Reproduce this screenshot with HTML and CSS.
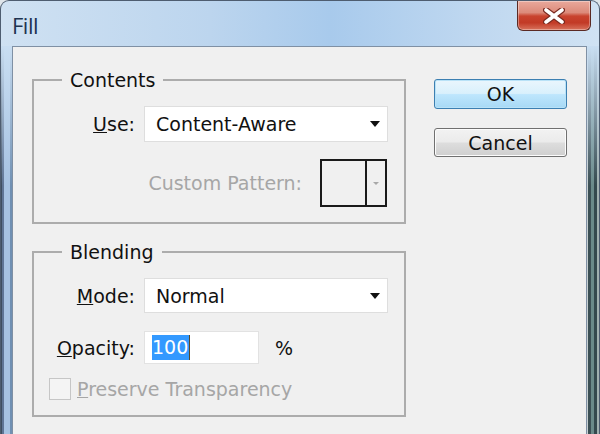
FILE: index.html
```html
<!DOCTYPE html>
<html lang="en">
<head>
    <meta charset="UTF-8">
    <title>Fill</title>
    <link rel="stylesheet" href="styles.css">
</head>
<body>
    <div class="window">
        <div class="titlebar">
            <span class="title">Fill</span>
            <div class="close">
                <svg width="22" height="16" viewBox="0 0 22 16">
                    <path d="M3 2 L19 14 M19 2 L3 14" stroke="#7a2a20" stroke-width="6" stroke-linecap="round"/>
                    <path d="M3 2 L19 14 M19 2 L3 14" stroke="#fff" stroke-width="3.6" stroke-linecap="round"/>
                </svg>
            </div>
        </div>
        <div class="frame">
            <div class="client">
                <div class="groups">
                    <fieldset class="group contents">
                        <legend>Contents</legend>
                        <div class="row">
                            <label class="lbl"><u>U</u>se:</label>
                            <div class="select">
                                <span>Content-Aware</span>
                                <i class="arrow"></i>
                            </div>
                        </div>
                        <div class="row pattern-row">
                            <label class="lbl disabled">Custom Pattern:</label>
                            <div class="pattern">
                                <div class="swatch"></div>
                                <div class="pick"><i></i></div>
                            </div>
                        </div>
                    </fieldset>
                    <fieldset class="group blending">
                        <legend>Blending</legend>
                        <div class="row">
                            <label class="lbl"><u>M</u>ode:</label>
                            <div class="select">
                                <span>Normal</span>
                                <i class="arrow"></i>
                            </div>
                        </div>
                        <div class="row opacity-row">
                            <label class="lbl"><u>O</u>pacity:</label>
                            <div class="input"><span class="sel">100</span><span class="caret"></span></div>
                            <span class="pct">%</span>
                        </div>
                        <div class="row check-row">
                            <span class="box"></span>
                            <label class="disabled"><u>P</u>reserve Transparency</label>
                        </div>
                    </fieldset>
                </div>
                <div class="buttons">
                    <button class="btn ok">OK</button>
                    <button class="btn">Cancel</button>
                </div>
            </div>
        </div>
    </div>
</body>
</html>
```

FILE: styles.css
```css
html, body{
    margin: 0;
    padding: 0;
    background: #dfe5ea;
}
body{
    width: 600px;
    height: 434px;
    overflow: hidden;
    font-family: "DejaVu Sans", Verdana, sans-serif;
    color: #111;
}
.window{
    display: flex;
    flex-direction: column;
    height: 434px;
    box-sizing: border-box;
    border: 1px solid #4e5d70;
    border-bottom: none;
    border-radius: 9px 9px 0 0;
    background: linear-gradient(to right, #cfe1f2 0%, #bcd5ee 35%, #a8caec 55%, #bed7f0 78%, #d0e2f3 100%);
    overflow: hidden;
}
.titlebar{
    height: 45px;
    display: flex;
    justify-content: space-between;
    align-items: flex-start;
    padding-left: 11px;
}
.title{
    margin-top: 9px;
    font-family: "Open Sans", "DejaVu Sans", sans-serif;
    font-size: 22px;
    letter-spacing: -0.5px;
    color: #1d3350;
}
.close{
    width: 74px;
    height: 30px;
    margin-right: 8px;
    box-sizing: border-box;
    border: 1px solid #5b2a24;
    border-top: none;
    border-radius: 0 0 6px 6px;
    background: linear-gradient(to bottom, #e9a99c 0%, #dc8a7a 40%, #c9432e 52%, #c23a26 75%, #d8735d 100%);
    box-shadow: inset 0 0 0 1px rgba(255,255,255,0.35);
    display: flex;
    align-items: center;
    justify-content: center;
}
.frame{
    flex: 1;
    padding: 0 12px 0 11px;
    background:
        linear-gradient(to bottom, #c9def2 0, rgba(201,222,242,0) 140px),
        linear-gradient(to right, #3e4e60 0 1px, #5f7595 1px 3px, #a6c2e1 3px 9px, #7090b3 9px 11px, transparent 11px calc(100% - 12px), #c8d0d2 calc(100% - 12px) calc(100% - 11px), #3c5055 calc(100% - 11px) calc(100% - 8px), #6a8a8a calc(100% - 8px) calc(100% - 5px), #34494e calc(100% - 5px) calc(100% - 2px), #a0b0b0 calc(100% - 2px));
}
.client{
    height: 100%;
    box-sizing: border-box;
    border: 1px solid #7f90a4;
    border-bottom: none;
    background: #f0f0f0;
    display: flex;
    padding: 21px 19px 0 19px;
}
.groups{
    width: 375px;
}
.group{
    margin: 0;
    padding: 0;
    border: 2px solid #acacac;
    min-width: 0;
    box-sizing: border-box;
}
.group legend{
    margin-left: 28px;
    padding: 0 8px;
    font-size: 19px;
    line-height: 24px;
}
.contents{
    height: 156px;
}
.blending{
    margin-top: 16px;
    height: 177px;
}
.row{
    display: flex;
    align-items: center;
    font-size: 19px;
}
.lbl{
    width: 101px;
    margin-right: 9px;
    text-align: right;
    white-space: nowrap;
}
.disabled{
    color: #a6a6a6;
}
.contents .row:first-of-type{
    margin-top: 14px;
}
.blending .row:first-of-type{
    margin-top: 14px;
}
.select{
    width: 244px;
    height: 36px;
    box-sizing: border-box;
    border: 1px solid #dedede;
    background: #fff;
    display: flex;
    align-items: center;
    justify-content: space-between;
    padding: 0 7px 0 11px;
}
.blending .select{
    height: 35px;
}
.arrow{
    width: 0;
    height: 0;
    border-left: 5px solid transparent;
    border-right: 5px solid transparent;
    border-top: 6px solid #111;
}
.pattern-row{
    justify-content: flex-end;
    margin-top: 17px;
    padding-right: 17px;
}
.pattern-row .lbl{
    width: auto;
    margin-right: 18px;
}
.pattern{
    width: 67px;
    height: 48px;
    box-sizing: border-box;
    border: 2px solid #1a1a1a;
    display: flex;
    background: #f0f0f0;
}
.swatch{
    flex: 1;
    border-right: 2px solid #1a1a1a;
}
.pick{
    width: 18px;
    display: flex;
    align-items: center;
    justify-content: center;
}
.pick i{
    border-left: 3px solid transparent;
    border-right: 3px solid transparent;
    border-top: 3px solid #a8a8a8;
}
.opacity-row{
    margin-top: 18px;
}
.input{
    width: 115px;
    height: 33px;
    box-sizing: border-box;
    border: 1px solid #e2e2e2;
    background: #fff;
    display: flex;
    align-items: center;
    padding-left: 7px;
}
.sel{
    background: #3399ff;
    color: #fff;
    line-height: 25px;
    padding-right: 1px;
}
.caret{
    width: 1px;
    height: 25px;
    background: #5a4a2a;
}
.pct{
    margin-left: 16px;
}
.check-row{
    margin-top: 14px;
    padding-left: 15px;
    color: #a6a6a6;
}
.box{
    width: 22px;
    height: 22px;
    box-sizing: border-box;
    border: 1px solid #c6c6c6;
    background: #f4f4f4;
    margin-right: 6px;
}
.buttons{
    margin-left: 28px;
    margin-top: 11px;
    display: flex;
    flex-direction: column;
    gap: 19px;
}
.btn{
    width: 133px;
    height: 29px;
    font-family: "DejaVu Sans", Verdana, sans-serif;
    font-size: 19px;
    color: #111;
    border: 1px solid #707070;
    border-radius: 3px;
    background: linear-gradient(to bottom, #f2f2f2 0%, #ebebeb 48%, #dddddd 52%, #cfcfcf 100%);
    box-shadow: inset 0 0 0 1px #fcfcfc;
    padding: 0;
}
.ok{
    height: 30px;
    border-color: #3c7fb1;
    background: linear-gradient(to bottom, #eaf6fd 0%, #d9f0fc 48%, #bee6fd 52%, #a7d9f5 100%);
    box-shadow: inset 0 0 0 1px #b9e2f7;
}
```
